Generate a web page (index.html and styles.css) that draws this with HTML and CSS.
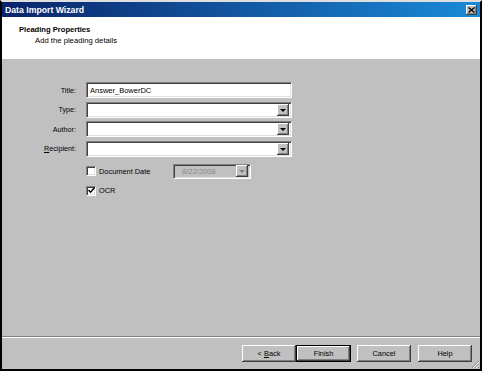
FILE: index.html
```html
<!DOCTYPE html>
<html>
<head>
<meta charset="utf-8">
<link rel="stylesheet" href="styles.css">
</head>
<body>
<div class="window">
  <div class="titlebar">
    <span class="title">Data Import Wizard</span>
    <span class="close">
      <svg width="7" height="6" viewBox="0 0 7 6"><path d="M0.5 0.5 L6.5 5.5 M6.5 0.5 L0.5 5.5" stroke="#000" stroke-width="1.4"/></svg>
    </span>
  </div>
  <div class="header">
    <div class="h-title">Pleading Properties</div>
    <div class="h-sub">Add the pleading details</div>
  </div>
  <div class="body">
    <div class="form">
      <label class="lbl">Title:</label>
      <div class="field"><span class="val">Answer_BowerDC</span></div>
      <label class="lbl">Type:</label>
      <div class="field combo"><span class="val"></span><span class="drop"><i class="arrow"></i></span></div>
      <label class="lbl">Author:</label>
      <div class="field combo"><span class="val"></span><span class="drop"><i class="arrow"></i></span></div>
      <label class="lbl"><u>R</u>ecipient:</label>
      <div class="field combo"><span class="val"></span><span class="drop"><i class="arrow"></i></span></div>
    </div>
    <div class="options">
      <div class="opt">
        <span class="check"></span>
        <span class="opt-lbl wide">Document Date</span>
        <div class="field combo date"><span class="val">8/22/2008</span><span class="drop"><i class="arrow"></i></span></div>
      </div>
      <div class="opt ocr">
        <span class="check"><svg width="7" height="7" viewBox="0 0 7 7"><path d="M0.5 3 L2.5 5.2 L6.5 0.8" stroke="#000" stroke-width="1.5" fill="none"/></svg></span>
        <span class="opt-lbl">OCR</span>
      </div>
    </div>
  </div>
  <div class="footer">
    <div class="sep"></div>
    <div class="buttons">
      <button class="btn">&lt; <u>B</u>ack</button>
      <button class="btn default">Finish</button>
      <button class="btn cancel">Cancel</button>
      <button class="btn help">Help</button>
    </div>
  </div>
  <svg class="grip" width="9" height="9" viewBox="0 0 9 9">
    <path d="M8 1 L1 8 M8 4 L4 8 M8 7 L7 8" stroke="#808080" stroke-width="1"/>
    <path d="M8 2 L2 8 M8 5 L5 8" stroke="#fff" stroke-width="1"/>
  </svg>
</div>
</body>
</html>
```

FILE: styles.css
```css
* { box-sizing: border-box; }
html, body { margin: 0; padding: 0; }
body {
  font-family: "Liberation Sans", Arial, sans-serif;
  font-size: 7.4px;
  color: #000;
  background: #c0c0c0;
}
.window {
  position: relative;
  width: 482px;
  height: 371px;
  display: flex;
  flex-direction: column;
  border-style: solid;
  border-width: 2px;
  border-color: #dfdfdf #000 #000 #000;
  background: #c0c0c0;
}
.titlebar {
  height: 15px;
  flex: none;
  display: flex;
  align-items: center;
  justify-content: space-between;
  padding: 0 3px 0 3px;
  background: linear-gradient(to right, #0a246a, #1a8ad8);
  color: #fff;
  font-weight: bold;
  font-size: 8.7px;
}
.close {
  width: 11px;
  height: 10px;
  background: #c0c0c0;
  display: flex;
  align-items: center;
  justify-content: center;
  box-shadow: inset -1px -1px #404040, inset 1px 1px #fff, inset -2px -2px #808080;
}
.close svg { display: block; }
.header {
  height: 42px;
  flex: none;
  background: #fff;
  padding: 7px 0 0 17px;
  line-height: 11px;
}
.h-title { font-weight: bold; font-size: 7.6px; }
.h-sub { margin-left: 16px; font-size: 7.7px; }
.body {
  flex: 1;
  padding-top: 23px;
}
.form {
  display: grid;
  grid-template-columns: 74px 206px;
  column-gap: 10px;
  row-gap: 3.6px;
  grid-auto-rows: 16px;
}
.lbl {
  text-align: right;
  align-self: center;
  font-size: 7.2px;
}
.field {
  position: relative;
  height: 16px;
  background: #fff;
  border: 1px solid;
  border-color: #808080 #fff #fff #808080;
  box-shadow: inset 1px 1px #404040, inset -1px -1px #dfdfdf;
  display: flex;
  align-items: center;
  padding: 0 2px 0 3px;
}
.val { flex: 1; font-size: 7.5px; white-space: nowrap; }
.drop {
  width: 12px;
  height: 12px;
  background: #c0c0c0;
  box-shadow: inset -1px -1px #404040, inset 1px 1px #fff, inset -2px -2px #808080;
  display: flex;
  align-items: center;
  justify-content: center;
}
.arrow {
  display: block;
  width: 0;
  height: 0;
  border-left: 3px solid transparent;
  border-right: 3px solid transparent;
  border-top: 3px solid #000;
  margin-top: 1px;
}
.options {
  margin-left: 84px;
  margin-top: 7px;
}
.opt {
  display: flex;
  align-items: center;
  height: 15px;
}
.opt.ocr { margin-top: 6px; height: 12px; }
.check {
  width: 10px;
  height: 10px;
  flex: none;
  background: #fff;
  border: 1px solid;
  border-color: #808080 #fff #fff #808080;
  box-shadow: inset 1px 1px #404040, inset -1px -1px #dfdfdf;
  display: flex;
  align-items: center;
  justify-content: center;
}
.check svg { display: block; }
.opt-lbl { margin-left: 3px; font-size: 7.4px; }
.opt-lbl.wide { width: 74px; }
.field.date {
  width: 78px;
  height: 15px;
  background: #c0c0c0;
  color: #8a8a8a;
  padding-left: 8px;
}
.field.date .arrow { border-top-color: #808080; }
.footer { flex: none; }
.sep {
  height: 2px;
  border-top: 1px solid #808080;
  border-bottom: 1px solid #fff;
}
.buttons {
  display: flex;
  justify-content: flex-end;
  padding: 7px 8px 7px 0;
}
.btn {
  width: 54px;
  height: 17px;
  padding: 0;
  font-family: "Liberation Sans", Arial, sans-serif;
  font-size: 7.4px;
  color: #000;
  background: #c0c0c0;
  border: none;
  box-shadow: inset -1px -1px #404040, inset 1px 1px #fff, inset -2px -2px #808080;
}
.btn.default {
  width: 55px;
  border: 1px solid #000;
}
.btn.cancel { margin-left: 6px; }
.btn.help { margin-left: 7px; }
.grip {
  position: absolute;
  right: 0;
  bottom: 0;
}
```
